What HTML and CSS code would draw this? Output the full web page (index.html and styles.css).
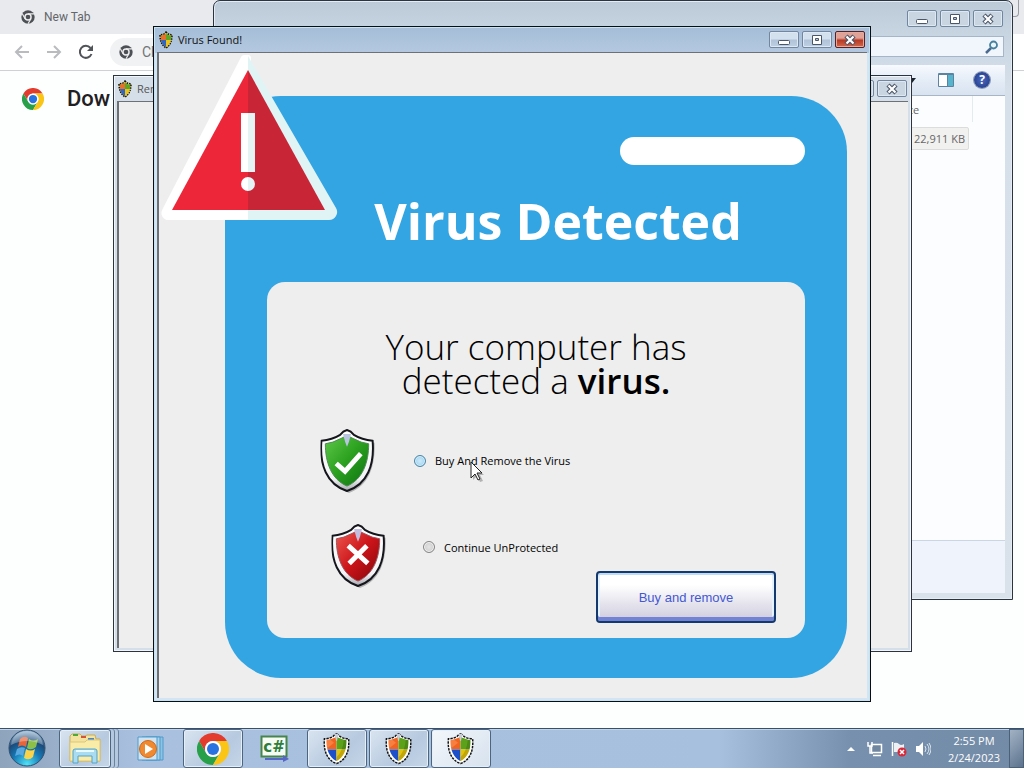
FILE: index.html
```html
<!DOCTYPE html>
<html lang="en">
<head>
    <meta charset="UTF-8">
    <meta name="viewport" content="width=device-width, initial-scale=1.0">
    <title>Virus Found!</title>
    <link rel="stylesheet" href="styles.css">
</head>
<body>
    <!-- shared icons -->
    <svg class="sprite" width="0" height="0" aria-hidden="true">
        <defs>
            <linearGradient id="green" x1="0" y1="0" x2="1" y2="1"><stop offset="0" stop-color="#5fc84a"/><stop offset=".5" stop-color="#2ba01f"/><stop offset="1" stop-color="#0c7010"/></linearGradient>
            <linearGradient id="red" x1="0" y1="0" x2="1" y2="1"><stop offset="0" stop-color="#ee5a50"/><stop offset=".5" stop-color="#cc141a"/><stop offset="1" stop-color="#80060a"/></linearGradient>
            <linearGradient id="rim" x1="0" y1="0" x2="0" y2="1"><stop offset="0" stop-color="#fff"/><stop offset=".8" stop-color="#f4f4f6"/><stop offset="1" stop-color="#a4a6ae"/></linearGradient>
            <radialGradient id="orb" cx=".5" cy=".95" r=".9"><stop offset="0" stop-color="#4fe3f8"/><stop offset=".45" stop-color="#1579b5"/><stop offset=".75" stop-color="#1d4a78"/><stop offset="1" stop-color="#8fb0cc"/></radialGradient>
            <clipPath id="shield-clip"><path d="M27 7Q31 10 34 11Q41 14 48 15C48 34 42 51 27 58C12 51 6 34 6 15Q13 14 20 11Q23 10 27 7Z"/></clipPath>
        </defs>
        <symbol id="shield" viewBox="0 0 56 66">
            <path d="M28 3Q33 6 35 8Q44 13 55 14C56 38 49 58 29 65C10 58 3 38 4 14Z" fill="#777" opacity=".5"/>
            <path d="M27 1Q31 2 34 6Q42 11 53 12C55 36 48 56 27 63C6 56 -1 36 1 12Q12 11 20 6Q23 2 27 1Z" fill="url(#rim)" stroke="#15151c" stroke-width="2"/>
        </symbol>
        <symbol id="uac" viewBox="0 0 56 66">
            <path d="M27 2Q31 3 34 7Q42 12 52 12C54 36 47 56 27 63C7 56 0 36 2 12Q12 12 20 7Q23 3 27 2Z" fill="#fff" stroke="#111" stroke-width="3" stroke-dasharray="5 2"/>
            <g clip-path="url(#shield-clip)">
                <path d="M0 0h27v34H0z" fill="#ef6420"/>
                <path d="M27 0h29v34H27z" fill="#5ba21a"/>
                <path d="M0 34h27v32H0z" fill="#1d50c8"/>
                <path d="M27 34h29v32H27z" fill="#e2c40c"/>
                <path d="M0 8Q14 12 22 20L10 30H0z" fill="#ff9a60" opacity=".5"/>
                <path d="M48 15C48 34 42 51 27 58V50Q40 38 42 14z" fill="#000" opacity=".15"/>
            </g>
            <path d="M23 2h8l-3 14h-2z" fill="#c8cdd8"/>
        </symbol>
        <symbol id="uac-small" viewBox="0 0 14 18">
            <path d="M7 1l2 2 4 1q0 9-6 13Q1 13 1 4l4-1z" fill="#e8c83c" stroke="#111" stroke-width="1.500" stroke-dasharray="1.500 1"/>
            <path d="M7 3v6H2V5z" fill="#e8702a"/>
            <path d="M7 3l5 2v4H7z" fill="#5ba626"/>
            <path d="M2 9h5v7q-4-2-5-7z" fill="#2f66c4"/>
            <path d="M7 9h5q-1 5-5 7z" fill="#eac41c"/>
        </symbol>
        <symbol id="chrome" viewBox="0 0 48 48">
            <path d="M24 12h20.800A24 24 0 0 0 3.200 12l10.400 18A12 12 0 0 1 24 12z" fill="#e33b2e"/>
            <path d="M34.400 30L24 48A24 24 0 0 1 3.200 12l10.400 18A12 12 0 0 0 34.400 30z" fill="#28a04a"/>
            <path d="M44.800 12A24 24 0 0 1 24 48l10.400-18A12 12 0 0 0 24 12z" fill="#fbc516"/>
            <circle cx="24" cy="24" r="12" fill="#fff"/>
            <circle cx="24" cy="24" r="9" fill="#2a72e0"/>
        </symbol>
        <symbol id="chrome-grey" viewBox="0 0 48 48">
            <circle cx="24" cy="24" r="23" fill="#4d5156"/>
            <circle cx="24" cy="24" r="13" fill="#eee"/>
            <circle cx="24" cy="24" r="8" fill="#4d5156"/>
            <path d="M24 13h22M14 30L4 12M34 30L24 47" stroke="#eee" stroke-width="4"/>
        </symbol>
        <symbol id="win-min" viewBox="0 0 14 12"><rect x="1.500" y="6.500" width="11" height="4" rx="1" fill="#fff" stroke="#4c5669"/></symbol>
        <symbol id="win-max" viewBox="0 0 14 12"><path d="M2.500 1.500h9v9h-9z" fill="#fff" stroke="#4c5669"/><path d="M5.500 4.500h3v2h-3z" fill="#b8c8da" stroke="#4c5669"/></symbol>
        <symbol id="win-close" viewBox="0 0 14 12"><path d="M3 2l8 8M11 2l-8 8" stroke="#4c5669" stroke-width="4.500"/><path d="M3.500 2.500l7 7M10.500 2.500l-7 7" stroke="#fff" stroke-width="2.200"/></symbol>
    </svg>

    <div class="desktop">
        <div class="browser">
            <div class="tab-strip">
                <svg class="tab-icon"><use href="#chrome-grey"/></svg>
                <span>New Tab</span>
                <div class="browser-caption"></div>
            </div>
            <div class="browser-bar">
                <button class="nav-button" aria-label="Back"><svg viewBox="0 0 16 16"><path d="M15 8H2M8 2L2 8l6 6" fill="none" stroke="#b9bbbe" stroke-width="2"/></svg></button>
                <button class="nav-button" aria-label="Forward"><svg viewBox="0 0 16 16"><path d="M1 8h13M8 2l6 6-6 6" fill="none" stroke="#b9bbbe" stroke-width="2"/></svg></button>
                <button class="nav-button" aria-label="Reload"><svg viewBox="0 0 16 16"><path d="M13.500 10A6 6 0 1 1 12.500 4" fill="none" stroke="#505357" stroke-width="2"/><path d="M15 1v6H9z" fill="#505357"/></svg></button>
                <div class="address"><svg class="tab-icon"><use href="#chrome-grey"/></svg><span>Ch</span></div>
            </div>
            <div class="browser-page">
                <svg class="page-logo"><use href="#chrome"/></svg>
                <span>Dow</span>
            </div>
        </div>

        <div class="window explorer">
            <div class="explorer-caption">
                <button class="caption-button" aria-label="Minimize"><svg><use href="#win-min"/></svg></button>
                <button class="caption-button" aria-label="Maximize"><svg><use href="#win-max"/></svg></button>
                <button class="caption-button" aria-label="Close"><svg><use href="#win-close"/></svg></button>
            </div>
            <div class="search">
                <input type="text" aria-label="Search">
                <svg viewBox="0 0 14 14"><path d="M1 13l5-5" stroke="#4a6a90" stroke-width="2.500"/><circle cx="8.500" cy="5" r="3.500" fill="#e8f6fa" stroke="#45809e" stroke-width="1.800"/></svg>
            </div>
            <div class="explorer-main">
                <div class="command-bar">
                    <svg class="view-caret" viewBox="0 0 8 5"><path d="M0 0h8L4 5z" fill="#1c2430"/></svg>
                    <svg class="preview-icon" viewBox="0 0 16 14"><path d="M.5.5h15v13H.5z" fill="#fff" stroke="#5b84a0"/><path d="M10 1h5v12h-5z" fill="#58b4cc"/><path d="M0 1.500h16" stroke="#5b84a0"/><path d="M9.500 0v14" stroke="#5b84a0"/></svg>
                    <span class="help">?</span>
                </div>
                <table class="files">
                    <thead><tr><th></th><th class="size">Size</th><th class="rest"></th></tr></thead>
                    <tbody><tr><td></td><td class="size"><span>22,911 KB</span></td><td class="rest"></td></tr></tbody>
                </table>
                <div class="details"></div>
            </div>
        </div>

        <div class="window remover">
            <div class="title-bar">
                <svg class="title-icon"><use href="#uac-small"/></svg>
                <span class="title">Rem</span>
                <button class="caption-button" aria-label="Minimize"><svg><use href="#win-min"/></svg></button>
                <button class="caption-button" aria-label="Maximize"><svg><use href="#win-max"/></svg></button>
                <button class="caption-button" aria-label="Close"><svg><use href="#win-close"/></svg></button>
            </div>
            <div class="client"></div>
        </div>

        <div class="window alert">
            <div class="title-bar">
                <svg class="title-icon"><use href="#uac-small"/></svg>
                <span class="title">Virus Found!</span>
                <button class="caption-button" aria-label="Minimize"><svg><use href="#win-min"/></svg></button>
                <button class="caption-button" aria-label="Maximize"><svg><use href="#win-max"/></svg></button>
                <button class="caption-button close" aria-label="Close"><svg><use href="#win-close"/></svg></button>
            </div>
            <div class="client">
                <form class="panel">
                    <div class="pill"></div>
                    <h1>Virus Detected</h1>
                    <div class="card">
                        <h2>Your computer has<br>detected a <b>virus.</b></h2>
                        <div class="option">
                            <svg class="shield" viewBox="0 0 56 66">
                                <use href="#shield"/>
                                <path d="M27 6Q31 9 34 10Q41 14 49 15C49 34 43 51 27 58C11 51 5 34 5 15Q13 14 20 10Q23 9 27 6Z" fill="url(#green)" stroke="#4f8a55"/>
                                <path d="M23 5h8l-2 8-2 5-2-5z" fill="#b9c4e2"/>
                                <path d="M16 35l9 8 16-18" fill="none" stroke="#fff" stroke-width="5"/>
                            </svg>
                            <label><input type="radio" name="choice" class="hot">Buy And Remove the Virus</label>
                        </div>
                        <div class="option last">
                            <svg class="shield" viewBox="0 0 56 66">
                                <use href="#shield"/>
                                <path d="M27 6Q31 9 34 10Q41 14 49 15C49 34 43 51 27 58C11 51 5 34 5 15Q13 14 20 10Q23 9 27 6Z" fill="url(#red)" stroke="#9a5560"/>
                                <path d="M23 5h8l-2 8-2 5-2-5z" fill="#c3bde0"/>
                                <path d="M17 22l20 18M36 22L18 40" fill="none" stroke="#fff" stroke-width="5"/>
                            </svg>
                            <label><input type="radio" name="choice">Continue UnProtected</label>
                            <button type="button" class="buy">Buy and remove</button>
                        </div>
                    </div>
                </form>
            </div>
            <svg class="warning" viewBox="0 0 178 166">
                <path d="M88 3h-4L5 156a4 4 0 0 0 4 6h79z" fill="#fff" stroke="#fff" stroke-width="6" stroke-linejoin="round"/>
                <path d="M88 1L176 153a8 8 0 0 1-7 12H88z" fill="#e0f4f6"/>
                <path d="M88 15L12 155h76z" fill="#ed2639"/>
                <path d="M88 15l77 140H88z" fill="#c82537"/>
                <path d="M81 58h7v59h-7zM88 122a7 7 0 0 0 0 14z" fill="#fff"/>
                <path d="M88 58h7v59h-7zM88 122a7 7 0 0 1 0 14z" fill="#e6f3f5"/>
            </svg>
        </div>

        <svg class="cursor" viewBox="0 0 14 22"><path d="M3 3v16l4-4 3 6 3-1-3-6h4z" fill="#000" opacity=".25"/><path d="M1 1v16l4-4 3 6 2-1-3-6h5z" fill="#fff" stroke="#222"/></svg>
    </div>

    <div class="taskbar">
        <button class="start" aria-label="Start">
            <svg viewBox="0 0 38 38">
                <circle cx="19" cy="19" r="18" fill="url(#orb)" stroke="#31506e"/>
                <path d="M12 10q4-4 8-1l-2 9q-4-3-8 0z" fill="#e8653a"/>
                <path d="M21 10q4 3 9 0l-2 8q-5 4-9 1z" fill="#8cc048"/>
                <path d="M9 20q4-3 8-1l-2 8q-3-3-8 0z" fill="#5aa8e0"/>
                <path d="M18 20q5 3 9 0l-2 8q-4 4-9 1z" fill="#fbd34a"/>
                <path d="M3 16Q5 3 19 2Q33 3 35 16Q19 8 3 16z" fill="#fff" opacity=".3"/>
            </svg>
        </button>
        <button class="task open stack" aria-label="Windows Explorer">
            <svg class="folder" viewBox="0 0 34 32">
                <path d="M2 3l2-2h8l2 2h3l2-1h8l1 4h4v22H2z" fill="#f3e3a0" stroke="#c9ad5c"/>
                <path d="M5 1h5v2H5z" fill="#50a838"/><path d="M13 3h5v2h-5z" fill="#d65436"/><path d="M20 5h6v2h-6z" fill="#4a86c8"/>
                <path d="M2 9h15l2-2h13v21H2z" fill="#f9eca8" stroke="#dcc675"/>
                <path d="M5 30V18q0-2 2-2h20q2 0 2 2v12h-5v-7H10v7z" fill="#a9dcf1" stroke="#55a3c8"/>
                <path d="M8 18h18" stroke="#e9fafc" stroke-width="2"/>
            </svg>
        </button>
        <button class="task" aria-label="Windows Media Player">
            <svg class="media" viewBox="0 0 28 26">
                <path d="M9 1h17v23H9z" fill="#8cc3e4" stroke="#4e9acc"/>
                <path d="M5 1h18v23H5z" fill="#a6d2ea" stroke="#4e9acc"/>
                <path d="M1 1h19v23H1z" fill="#cfe4f0" stroke="#4e9acc"/>
                <circle cx="11" cy="13" r="8.500" fill="#f08a30" stroke="#d06818"/>
                <path d="M8 8l8 5-8 5z" fill="#fff"/>
            </svg>
        </button>
        <button class="task open" aria-label="Google Chrome"><svg class="chrome"><use href="#chrome"/></svg></button>
        <button class="task" aria-label="C# editor">
            <svg class="csharp" viewBox="0 0 30 28">
                <path d="M1.500 1.500h25v20h-25z" fill="#f6fbf4" stroke="#46864c" stroke-width="2"/>
                <text x="14" y="17" text-anchor="middle">c#</text>
                <path d="M5 23h18v-3l6 4-6 3v-2H5z" fill="#5866c8"/>
            </svg>
        </button>
        <button class="task open" aria-label="Virus tool"><svg class="uac"><use href="#uac"/></svg></button>
        <button class="task open" aria-label="Remover"><svg class="uac"><use href="#uac"/></svg></button>
        <button class="task open active" aria-label="Virus Found!"><svg class="uac"><use href="#uac"/></svg></button>
        <div class="tray">
            <svg class="tray-arrow" viewBox="0 0 8 5"><path d="M0 5l4-4 4 4z" fill="#fff"/></svg>
            <svg viewBox="0 0 16 16"><path d="M4.500 3.500h10v8h-10z" fill="#70879f" stroke="#fff" stroke-width="1.500"/><path d="M6 14.500h8M1 1v4h4V1M3 5v7h3" fill="none" stroke="#fff" stroke-width="1.500"/></svg>
            <svg viewBox="0 0 16 16"><path d="M1.500 1v14" stroke="#fff" stroke-width="1.500"/><path d="M3 2q3-1 5 1t5 0v8H3z" fill="#eef1f4"/><circle cx="11" cy="11" r="4.500" fill="#d8293a"/><path d="M9 9l4 4M13 9l-4 4" stroke="#fff" stroke-width="1.500"/></svg>
            <svg viewBox="0 0 16 16"><path d="M1 5h3l4-4v14l-4-4H1z" fill="#fff"/><path d="M10 5q2 3 0 6M12 3q4 5 0 10M14 2q4 6 0 12" fill="none" stroke="#dce5ee"/></svg>
            <div class="clock">2:55 PM<br>2/24/2023</div>
            <button class="show-desktop" aria-label="Show desktop"></button>
        </div>
    </div>
</body>
</html>
```

FILE: styles.css
```css
* {
    box-sizing: border-box;
}
body {
    margin: 0;
    height: 100vh;
    display: flex;
    flex-direction: column;
    overflow: hidden;
    font-family: "Open Sans", "Noto Sans", sans-serif;
    font-size: 11px;
    color: #111;
    background-color: #fdfefe;
}
button {
    padding: 0;
    border: none;
    background: none;
    font-family: inherit;
}
.sprite {
    position: absolute;
}
.desktop {
    position: relative;
    flex: 1;
}

/* browser in the background */
.tab-strip {
    display: flex;
    align-items: center;
    height: 34px;
    padding-left: 21px;
    gap: 9px;
    font-family: Roboto, sans-serif;
    font-size: 12px;
    color: #63666a;
    background-color: #e9eaee;
}
.tab-icon {
    width: 14px;
    height: 14px;
}
.browser-caption {
    align-self: flex-start;
    width: 60px;
    height: 17px;
    margin-left: auto;
    margin-right: 5px;
    border: 1px solid #999da3;
    border-top: none;
    border-radius: 0 0 4px 4px;
}
.browser-bar {
    display: flex;
    align-items: center;
    height: 37px;
    padding-left: 14px;
    gap: 16px;
    border-bottom: 1px solid #cfd1d4;
    background-color: #fff;
}
.nav-button, .nav-button svg {
    width: 16px;
    height: 16px;
}
.address {
    display: flex;
    align-items: center;
    width: 760px;
    height: 28px;
    padding-left: 9px;
    gap: 9px;
    border-radius: 14px;
    font-family: Roboto, sans-serif;
    font-size: 14px;
    color: #707478;
    background-color: #f1f2f4;
}
.browser-page {
    display: flex;
    align-items: center;
    padding: 15px 22px;
    gap: 23px;
    font-family: Roboto, sans-serif;
    font-size: 22px;
    font-weight: 500;
    color: #1f2023;
}
.page-logo {
    width: 22px;
    height: 22px;
}

/* windows */
.window {
    position: absolute;
    display: flex;
    flex-direction: column;
    border: 1px solid #2c3440;
}
.title-bar {
    display: flex;
    align-items: center;
    height: 25px;
    padding: 0 2px;
    gap: 3px;
}
.title-icon {
    width: 14px;
    height: 18px;
}
.title {
    flex: 1;
    padding-left: 2px;
}
.caption-button {
    display: flex;
    align-items: center;
    justify-content: center;
    width: 30px;
    height: 17px;
    border: 1px solid #7286a0;
    border-radius: 2px;
    background: linear-gradient(#d3e0ee 45%, #b0c3d9 55%, #bed0e2);
    box-shadow: inset 0 0 0 1px #dde8f3;
}
.caption-button svg {
    width: 14px;
    height: 12px;
}
.caption-button.close {
    border-color: #572024;
    background: linear-gradient(#e0a196 40%, #b93a25 55%, #d2684d);
    box-shadow: inset 0 0 0 1px #e6a99a;
}
.client {
    flex: 1;
    border: 1px solid #6d7176;
    border-width: 1px 0 0 2px;
    background-color: #eee;
}

.explorer {
    top: 0;
    right: 11px;
    bottom: 128px;
    left: 213px;
    padding: 0 7px 6px;
    border-radius: 7px 7px 0 0;
    background: linear-gradient(#bccad8, #cad7e3 40px, #d6e0ea 90px, #d9e1ea);
    box-shadow: inset 0 0 0 1px #e4edf5;
}
.explorer-caption {
    display: flex;
    justify-content: flex-end;
    padding: 9px 2px;
    gap: 3px;
}
.explorer-caption .caption-button, .remover .caption-button {
    background: #c9d6e2;
}
.search {
    display: flex;
    align-items: center;
    align-self: flex-end;
    width: 240px;
    height: 21px;
    margin: 0 1px 8px;
    padding-right: 4px;
    border: 1px solid #a4b6c8;
    background-color: #f0f6fb;
}
.search input {
    flex: 1;
    min-width: 0;
    border: none;
    background: none;
}
.search svg {
    width: 14px;
    height: 14px;
}
.explorer-main {
    flex: 1;
    display: flex;
    flex-direction: column;
    background-color: #fcfdfe;
}
.command-bar {
    display: flex;
    align-items: center;
    justify-content: flex-end;
    height: 31px;
    padding-right: 15px;
    gap: 22px;
    border-bottom: 1px solid #a8b5c6;
    background: linear-gradient(#f7fafe, #e5edf7 50%, #d8e3f0);
}
.view-caret {
    width: 8px;
    height: 5px;
}
.preview-icon {
    width: 16px;
    height: 14px;
}
.help {
    width: 16px;
    height: 16px;
    margin-left: -2px;
    border-radius: 50%;
    line-height: 16px;
    text-align: center;
    font-size: 12px;
    font-weight: bold;
    color: #fff;
    background: radial-gradient(#4a68c0, #1c347e);
    box-shadow: 0 0 0 1px #8a98b4;
}
.files {
    width: 100%;
    border-collapse: collapse;
    table-layout: fixed;
    color: #666;
}
.files th, .files td {
    height: 26px;
    padding: 0 3px;
    font-weight: normal;
}
.files td {
    height: 32px;
}
.files th.size {
    width: 76px;
    text-align: left;
    border-right: 1px solid #e6e9ed;
}
.files td.size {
    text-align: right;
}
.files .rest {
    width: 33px;
}
.files span {
    display: block;
    padding: 3px;
    border: 1px solid #dcdcdc;
    border-radius: 2px;
    background-color: #f1f1f0;
}
.details {
    height: 53px;
    margin-top: auto;
    border-top: 1px solid #ccd6e2;
    background-color: #eff3fc;
}

.remover {
    top: 75px;
    right: 112px;
    bottom: 76px;
    left: 113px;
    padding: 0 3px 3px;
    color: #555;
    background-color: #d5dfe9;
    box-shadow: inset 0 0 0 1px #f3f6f9;
}
.remover .title-bar {
    padding: 0 1px;
}

.alert {
    top: 26px;
    right: 153px;
    left: 153px;
    padding: 0 3px 3px;
    border-color: #0a0d12;
    background: linear-gradient(#a5bdd8, #b4c9e0 26px, #d3e5f2 26px);
    box-shadow: inset 0 0 0 1px #c4e4f4;
}

/* alert contents */
.panel {
    margin: 43px 20px 20px 66px;
    padding: 41px 42px 40px;
    border-radius: 56px;
    background-color: #33a5e2;
}
.pill {
    width: 185px;
    height: 28px;
    margin-left: auto;
    border-radius: 14px;
    background-color: #fff;
}
h1 {
    margin: 0;
    padding: 0 0 4px 44px;
    text-align: center;
    font-size: 50px;
    line-height: 113px;
    white-space: nowrap;
    color: #fff;
}
.card {
    padding: 48px 29px 15px 53px;
    border-radius: 18px;
    background-color: #eee;
}
h2 {
    margin: 0 0 31px -24px;
    text-align: center;
    font-size: 35px;
    font-weight: 350;
    line-height: 34px;
    color: #000;
}
h2 b {
    font-weight: 600;
}
.option {
    display: flex;
    gap: 38px;
    margin-bottom: 30px;
}
.option.last {
    gap: 36px;
    height: 99px;
    margin-bottom: 0;
    padding-left: 11px;
}
.shield {
    width: 56px;
    height: 65px;
}
.option label {
    display: flex;
    align-items: center;
    gap: 9px;
    height: 63px;
    white-space: nowrap;
    color: #000;
}
.option.last label {
    flex: 1;
    height: 46px;
}
.option input {
    appearance: none;
    width: 12px;
    height: 12px;
    margin: 0;
    border: 1px solid #858585;
    border-radius: 50%;
    background: radial-gradient(#e4e4e4, #c6c6c6);
    box-shadow: inset 0 0 0 1px #f4f4f4;
}
.option input.hot {
    border-color: #4a84a4;
    background: radial-gradient(#cdeafa, #90cdee);
    box-shadow: inset 0 0 0 1px #d8effa;
}
.buy {
    flex: none;
    align-self: flex-end;
    width: 180px;
    height: 52px;
    margin-left: -20px;
    border: 2px solid #14396e;
    border-radius: 4px;
    font-family: "Liberation Sans", sans-serif;
    font-size: 13px;
    color: #4458d4;
    background: linear-gradient(#fff 25%, #cdcbdd);
    box-shadow: inset 0 2px #c0dcf5, inset 0 -4px #7383d4, inset 2px 0 #e4f2ff, inset -2px 0 #e4f2ff;
}
.warning {
    position: absolute;
    top: 28px;
    left: 6px;
    width: 178px;
    height: 166px;
}
.cursor {
    position: absolute;
    top: 461px;
    left: 470px;
    width: 14px;
    height: 22px;
}

/* taskbar */
.taskbar {
    display: flex;
    height: 40px;
    padding-left: 8px;
    gap: 2px;
    border-top: 1px solid #36506e;
    background: linear-gradient(90deg, #8ea3bc, #a9c1df 140px, #a6c0dd 720px, #7690ae 850px, #738ba6);
    box-shadow: inset 0 1px #c5d5e6;
}
.start, .start svg {
    width: 38px;
    height: 38px;
}
.start {
    margin-right: 11px;
}
.task {
    display: flex;
    align-items: center;
    justify-content: center;
    width: 60px;
    height: 39px;
    border: 1px solid transparent;
    border-radius: 3px;
}
.task.open {
    border-color: #4e6580;
    background: linear-gradient(135deg, #d9e4f0, #b6c9df 60%, #c6d6e8);
    box-shadow: inset 0 0 0 1px #e6eff8;
}
.task.active {
    background: linear-gradient(135deg, #f3f7fb, #d7e2ee);
}
.task.stack {
    width: 52px;
    margin-right: 8px;
    box-shadow: inset 0 0 0 1px #e6eff8, 3px 0 #b4c8de, 4px 0 #6c83a0, 7px 0 #b4c8de, 8px 0 #6c83a0;
}
.folder {
    width: 34px;
    height: 32px;
}
.media {
    width: 28px;
    height: 26px;
}
.task .chrome {
    width: 32px;
    height: 32px;
}
.csharp {
    width: 30px;
    height: 28px;
}
.csharp text {
    font-family: "DejaVu Sans", sans-serif;
    font-size: 15px;
    font-weight: bold;
    fill: #2f7d3b;
}
.uac {
    width: 28px;
    height: 32px;
}
.tray {
    display: flex;
    align-items: center;
    margin-left: auto;
    gap: 8px;
}
.tray svg {
    width: 16px;
    height: 16px;
}
.tray .tray-arrow {
    width: 8px;
    height: 5px;
    margin-right: 4px;
}
.clock {
    width: 66px;
    margin-left: 2px;
    text-align: center;
    line-height: 17px;
    color: #fff;
}
.show-desktop {
    width: 15px;
    height: 39px;
    margin-left: -6px;
    border: 1px solid #4b6079;
    background: linear-gradient(135deg, #a2b2c4, #5c738e);
}
```
